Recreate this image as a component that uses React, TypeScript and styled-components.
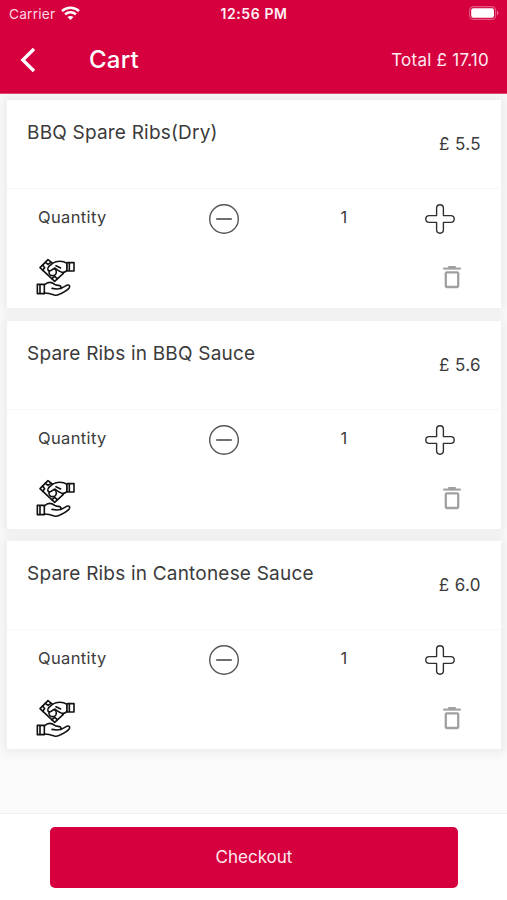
import React from "react";
import styled, { createGlobalStyle } from "styled-components";

const GlobalStyle = createGlobalStyle`
  * { box-sizing: border-box; }
  body { margin: 0; background: #fafafa; font-family: Inter, "Liberation Sans", sans-serif; color: #3b3b3b; }
  button { font: inherit; color: inherit; border: 0; padding: 0; background: none; display: block; }
  svg { display: block; }
`;

const Screen = styled.div`
  width: 507px;
  height: 900px;
  display: flex;
  flex-direction: column;
  overflow: hidden;
`;

const Header = styled.header`
  height: 94px;
  flex: none;
  background: #d6003f;
  border-bottom: 1px solid #df4a72;
  color: #fff;
`;

const StatusBar = styled.div`
  height: 27px;
  display: grid;
  grid-template-columns: 1fr auto 1fr;
  align-items: center;
  padding: 0 8px 0 9px;
`;

const Carrier = styled.div`
  display: flex;
  align-items: center;
  gap: 6px;
  font-size: 13.7px;
  letter-spacing: 0.2px;
  color: #ffd7e2;
`;

const Clock = styled.div`
  font-size: 14px;
  font-weight: 600;
  letter-spacing: 0.6px;
  color: #fff0f4;
`;

const Battery = styled.div`
  justify-self: end;
  padding-bottom: 1px;
`;

const NavBar = styled.div`
  height: 66px;
  display: flex;
  align-items: center;
  padding: 0 18px 0 20px;
`;

const PageTitle = styled.h1`
  margin: 0 auto 0 53px;
  font-size: 24px;
  line-height: 30px;
  font-weight: 500;
  letter-spacing: 0.2px;
`;

const Total = styled.div`
  font-size: 17px;
  line-height: 22px;
  letter-spacing: 0.25px;
  color: #ffeaf0;
`;

const CartList = styled.main`
  flex: 1;
  padding: 6px 6px 0 7px;
  display: flex;
  flex-direction: column;
  gap: 12.5px;
`;

const Card = styled.article`
  height: 208px;
  flex: none;
  background: #fff;
  box-shadow: 0 0 9px 4px rgba(0, 0, 0, 0.055);
`;

const CardTop = styled.div`
  height: 89px;
  display: flex;
  justify-content: space-between;
  padding: 20px 20px 0 20px;
  border-bottom: 1px solid #f7f7f7;
`;

const ItemName = styled.h2`
  margin: 0;
  padding-top: 1px;
  font-size: 19px;
  line-height: 24px;
  font-weight: 400;
  letter-spacing: 0.2px;
`;

const Price = styled.div`
  padding-top: 13px;
  font-size: 17px;
  line-height: 22px;
  letter-spacing: 0.4px;
`;

const QuantityRow = styled.div`
  height: 60px;
  display: grid;
  grid-template-columns: 170px 56px 160px 1fr;
  align-items: start;
  padding: 14px 0 0 31px;
`;

const Label = styled.div`
  font-size: 16.5px;
  line-height: 28px;
  letter-spacing: 0.35px;
`;

const Count = styled(Label)`
  text-align: center;
`;

const ActionRow = styled.div`
  display: flex;
  justify-content: space-between;
  padding: 9px 40px 0 29px;
`;

const DeleteButton = styled.button`
  height: 26px;
  padding-top: 7px;
`;

const Footer = styled.footer`
  height: 87px;
  flex: none;
  padding: 13px 49px 0 50px;
  background: #fff;
  border-top: 1px solid #efefef;
`;

const CheckoutButton = styled.button`
  width: 100%;
  height: 61px;
  padding-bottom: 2px;
  border-radius: 5px;
  background: #d6003f;
  color: #ffeaf0;
  font-size: 17px;
`;

const WifiIcon = () => (
  <svg width="19" height="15" viewBox="0 0 19 15" fill="none" stroke="#fff" strokeWidth="2.5">
    <path d="M1 5.2C5.8.7 13.2.7 18 5.2M4.1 8.3c3-2.8 7.8-2.8 10.8 0" />
    <path d="M9.5 14 6.5 11c1.7-1.5 4.3-1.5 6 0Z" fill="#fff" stroke="none" />
  </svg>
);

const BatteryIcon = () => (
  <svg width="30" height="14" viewBox="0 0 30 14">
    <rect x=".6" y=".6" width="26" height="12.8" rx="3.7" fill="none" stroke="#e45880" strokeWidth="1.1" />
    <rect x="2.2" y="2.2" width="22.8" height="9.6" rx="2" fill="#fff" />
    <path d="M28 4.8c1.8.7 1.8 3.7 0 4.4Z" fill="#eb7d9e" />
  </svg>
);

const BackIcon = () => (
  <svg width="16" height="26" viewBox="0 0 16 26" fill="none" stroke="#fff" strokeWidth="3.3">
    <path d="M14 2 2.8 13 14 24" />
  </svg>
);

const MinusIcon = () => (
  <svg width="32" height="32" viewBox="0 0 32 32" fill="none" stroke="#555">
    <circle cx="16" cy="16" r="14.3" strokeWidth="1.4" />
    <path d="M8.2 16h15.6" strokeWidth="1.7" />
  </svg>
);

const PlusIcon = () => (
  <svg width="32" height="32" viewBox="0 0 32 32" fill="none" stroke="#303030" strokeWidth="1.4" strokeLinejoin="round">
    <path d="M12.6 12.6V5.2a3.4 3.4 0 0 1 6.8 0v7.4h7.4a3.4 3.4 0 0 1 0 6.8h-7.4v7.4a3.4 3.4 0 0 1-6.8 0v-7.4H5.2a3.4 3.4 0 0 1 0-6.8Z" />
  </svg>
);

const TrashIcon = () => (
  <svg width="18" height="24" viewBox="0 0 18 24" fill="none" stroke="#a0a0a0">
    <path d="M.2 3.6h17.6" strokeWidth="2.1" />
    <path d="M5.2 2h7.6" strokeWidth="2" />
    <rect x="2.8" y="7.3" width="12.4" height="14.7" rx="1" strokeWidth="2.3" />
  </svg>
);

const CashHandsIcon = () => (
  <svg width="40" height="40" viewBox="18 18 120 120" fill="none" stroke="#111" strokeWidth="4.8" strokeLinecap="round" strokeLinejoin="round">
    <path d="M54 23 30 47l44 41 26-24-20-20Z" />
    <path d="m46 31 8 6 9-6M38 39l6 8-6 8M66 80l8-7 8 7" />
    <circle cx="68" cy="60" r="11" />
    <path d="M111 34c-9-6-22-7-33-5-8 2-16 9-22 15-6 8-2 14 5 12 6-1 8-8 14-8 8 7 16 13 25 13 4 0 8-3 11-6Z" fill="#fff" />
    <path d="m78 41 14 7" />
    <path d="M111 32h21v25h-21Zm7 0v25" fill="#fff" />
    <path d="M22 97h21v28H22Zm8 0v28" />
    <path d="M43 99c9-9 21-10 31-2 7 5 18 1 19 8 0 5-5 6-12 6l-15-2M92 110l18-10c7-3 11 1 8 7-6 8-16 13-26 18-6 4-12 6-19 4-11-4-18-6-30-6" />
  </svg>
);

const items = [
  { name: "BBQ Spare Ribs(Dry)", price: "£ 5.5", quantity: 1 },
  { name: "Spare Ribs in BBQ Sauce", price: "£ 5.6", quantity: 1 },
  { name: "Spare Ribs in Cantonese Sauce", price: "£ 6.0", quantity: 1 },
];

export default function App() {
  return (
    <Screen>
      <GlobalStyle />
      <Header>
        <StatusBar>
          <Carrier>Carrier <WifiIcon /></Carrier>
          <Clock>12:56 PM</Clock>
          <Battery><BatteryIcon /></Battery>
        </StatusBar>
        <NavBar>
          <button aria-label="Back"><BackIcon /></button>
          <PageTitle>Cart</PageTitle>
          <Total>Total £ 17.10</Total>
        </NavBar>
      </Header>
      <CartList>
        {items.map((item) => (
          <Card key={item.name}>
            <CardTop>
              <ItemName>{item.name}</ItemName>
              <Price>{item.price}</Price>
            </CardTop>
            <QuantityRow>
              <Label>Quantity</Label>
              <button aria-label="Decrease quantity"><MinusIcon /></button>
              <Count>{item.quantity}</Count>
              <button aria-label="Increase quantity"><PlusIcon /></button>
            </QuantityRow>
            <ActionRow>
              <CashHandsIcon />
              <DeleteButton aria-label="Remove item"><TrashIcon /></DeleteButton>
            </ActionRow>
          </Card>
        ))}
      </CartList>
      <Footer>
        <CheckoutButton>Checkout</CheckoutButton>
      </Footer>
    </Screen>
  );
}
